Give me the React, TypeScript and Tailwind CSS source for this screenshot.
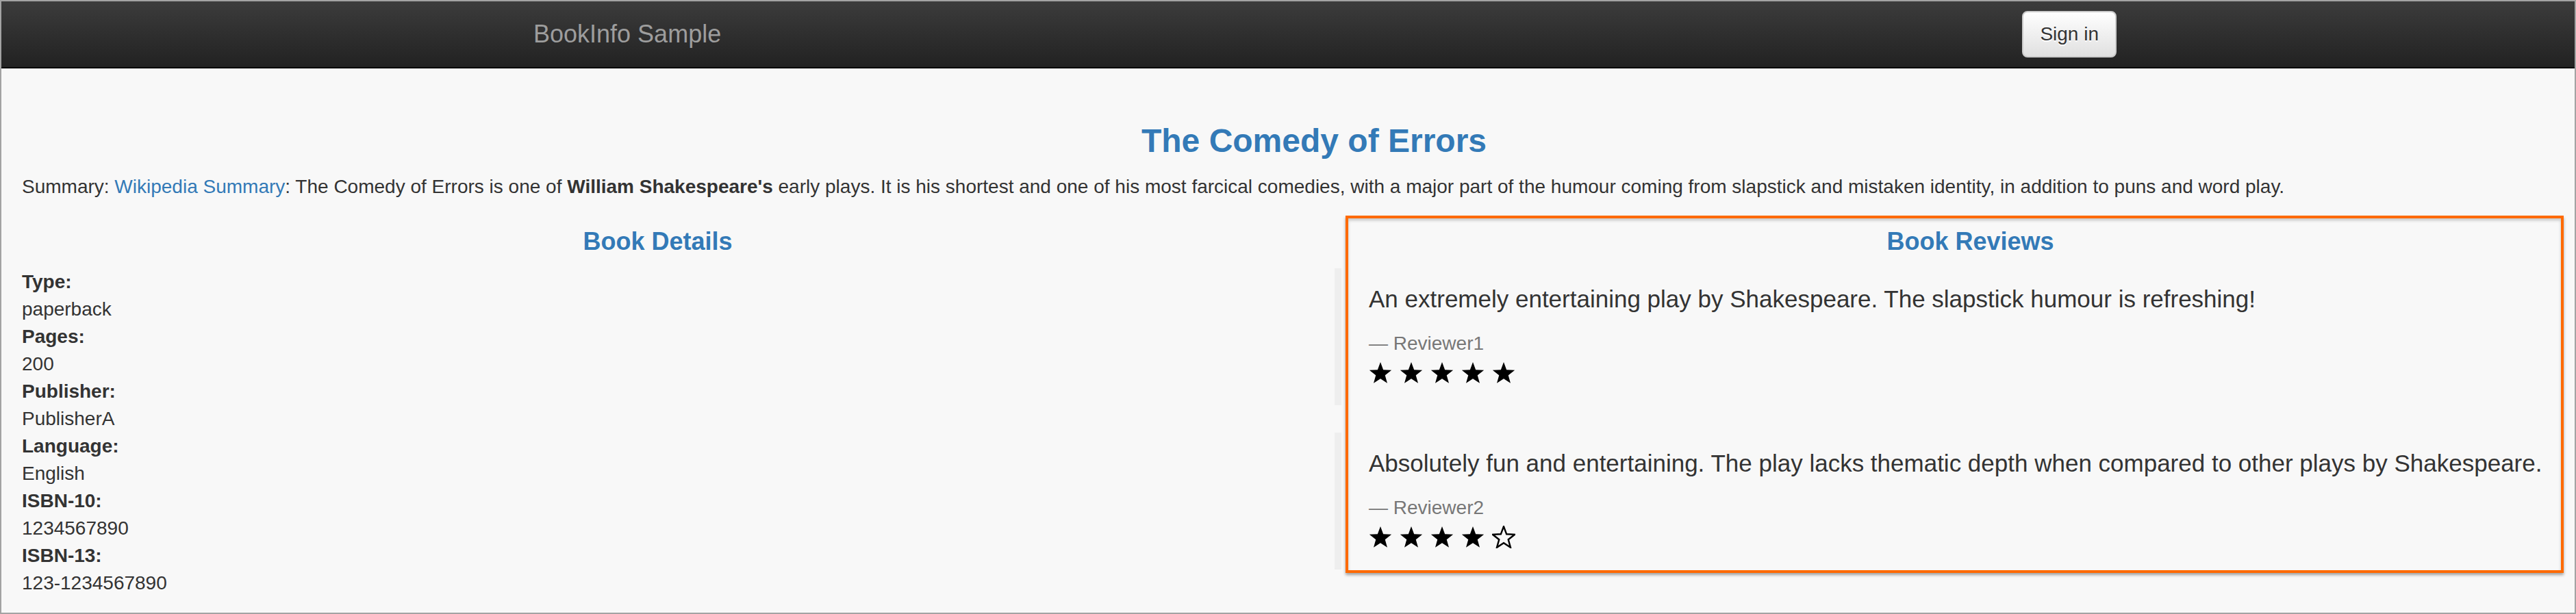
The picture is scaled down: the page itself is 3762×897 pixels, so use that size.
import React from 'react';

const details: Array<{ label: string; value: string }> = [
  { label: 'Type:', value: 'paperback' },
  { label: 'Pages:', value: '200' },
  { label: 'Publisher:', value: 'PublisherA' },
  { label: 'Language:', value: 'English' },
  { label: 'ISBN-10:', value: '1234567890' },
  { label: 'ISBN-13:', value: '123-1234567890' },
];

const reviews = [
  {
    text: 'An extremely entertaining play by Shakespeare. The slapstick humour is refreshing!',
    reviewer: 'Reviewer1',
    stars: 5,
  },
  {
    text: 'Absolutely fun and entertaining. The play lacks thematic depth when compared to other plays by Shakespeare.',
    reviewer: 'Reviewer2',
    stars: 4,
  },
];

// five-point star, fuller arms like the glyphicon one
const STAR =
  '12,0.7 14.94,8.65 23.41,8.99 16.76,14.25 19.05,22.41 12,17.7 4.95,22.41 7.24,14.25 0.59,8.99 9.06,8.65';

const Star = ({ filled }: { filled: boolean }) => (
  <svg width="34" height="33" viewBox="0 0 24 23.2" className="block">
    {filled ? (
      <polygon points={STAR} fill="#000" />
    ) : (
      <polygon points={STAR} fill="none" stroke="#000" strokeWidth="1.7" strokeLinejoin="miter" />
    )}
  </svg>
);

const App: React.FC = () => {
  return (
    <div className="h-[897px] w-full overflow-hidden border-2 border-[#a3a3a3] bg-[#f8f8f8] font-['Liberation_Sans',Arial,sans-serif] text-[28px] leading-[40px] text-[#333]">
      <div className="relative w-[3834px]">
        {/* Navbar */}
        <nav className="h-[98px] border-b-2 border-[#080808] bg-gradient-to-b from-[#3c3c3c] to-[#222]">
          <div className="mx-auto flex h-full w-[2340px] items-center justify-between pl-[30px]">
            <a href="#" className="text-[36px] leading-[40px] text-[#9d9d9d]">
              BookInfo Sample
            </a>
            <button
              type="button"
              className="mr-[-2px] h-[68px] rounded-[8px] border-2 border-[#ccc] bg-gradient-to-b from-[#fff] to-[#e0e0e0] px-[24px] text-[28px] leading-[40px] text-[#333] [text-shadow:0_2px_0_#fff]"
            >
              Sign in
            </button>
          </div>
        </nav>

        <div className="px-[30px]">
          <h3 className="mt-[80px] mb-[20px] text-center text-[48px] leading-[52.8px] font-semibold text-[#337ab7]">
            The Comedy of Errors
          </h3>
          <p className="mb-[20px] whitespace-nowrap">
            Summary: <a href="#" className="text-[#337ab7]">Wikipedia Summary</a>: The Comedy of Errors is one of{' '}
            <b>William Shakespeare's</b> early plays. It is his shortest and one of his most farcical comedies, with a
            major part of the humour coming from slapstick and mistaken identity, in addition to puns and word play.
          </p>

          <div className="-mx-[30px] grid grid-cols-2">
            {/* Book Details */}
            <div className="px-[30px]">
              <h4 className="my-[20px] text-center text-[36px] leading-[39.6px] font-semibold text-[#337ab7]">
                Book Details
              </h4>
              <dl className="mb-[40px]">
                {details.map((d) => (
                  <React.Fragment key={d.label}>
                    <dt className="font-bold">{d.label}</dt>
                    <dd>{d.value}</dd>
                  </React.Fragment>
                ))}
              </dl>
            </div>

            {/* Book Reviews */}
            <div className="px-[30px]">
              <h4 className="my-[20px] text-center text-[36px] leading-[39.6px] font-semibold text-[#337ab7]">
                Book Reviews
              </h4>
              {reviews.map((r) => (
                <blockquote
                  key={r.reviewer}
                  className="mb-[40px] border-l-[10px] border-[#eee] px-[40px] py-[20px] text-[35px] leading-[50px]"
                >
                  <p className="mb-[20px] whitespace-nowrap">{r.text}</p>
                  <small className="block text-[28px] leading-[40px] text-[#777]">
                    {'\u2014\u00a0'}
                    {r.reviewer}
                  </small>
                  <div className="flex h-[50px] items-start gap-[11px] pt-[6px]">
                    {[0, 1, 2, 3, 4].map((i) => (
                      <Star key={i} filled={i < r.stars} />
                    ))}
                  </div>
                </blockquote>
              ))}
            </div>
          </div>
        </div>

        {/* annotation highlight over the reviews panel */}
        <div className="pointer-events-none absolute top-[313px] left-[1963px] h-[522px] w-[1779px] border-4 border-[#ff6a00] shadow-[0_3px_4px_rgba(0,0,0,0.35),inset_0_3px_4px_rgba(0,0,0,0.2)]" />
      </div>
    </div>
  );
};

export default App;
